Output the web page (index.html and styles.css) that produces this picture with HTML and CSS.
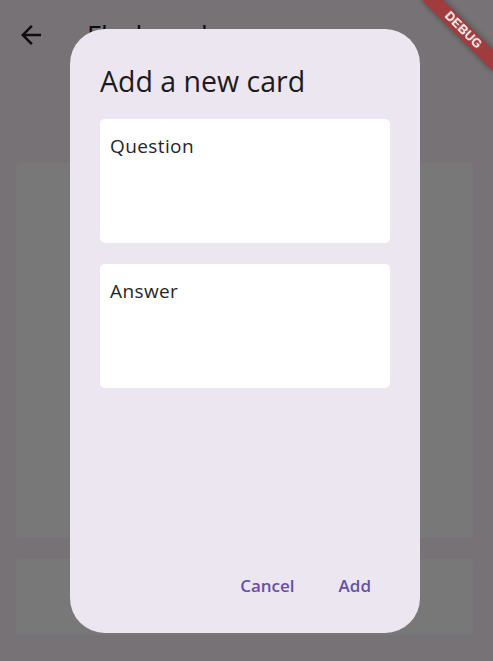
FILE: index.html
```html
<!DOCTYPE html>
<html lang="en">
<head>
<meta charset="utf-8">
<title>Flashcards</title>
<link rel="stylesheet" href="styles.css">
</head>
<body>
<div class="app">
  <header class="appbar">
    <button class="back" aria-label="Back">
      <svg viewBox="0 0 24 24" width="30" height="30"><path d="M20 11H7.83l5.59-5.59L12 4l-8 8 8 8 1.41-1.41L7.83 13H20v-2z" fill="currentColor"/></svg>
    </button>
    <h1 class="title">Flashcards</h1>
  </header>
  <main class="list">
    <div class="card card-main"></div>
    <div class="card card-small"></div>
  </main>
</div>

<div class="overlay">
  <div class="dialog" role="dialog">
    <h2 class="dialog-title">Add a new card</h2>
    <div class="fields">
      <div class="field"><span class="field-label">Question</span></div>
      <div class="field"><span class="field-label">Answer</span></div>
    </div>
    <div class="actions">
      <button class="text-btn">Cancel</button>
      <button class="text-btn">Add</button>
    </div>
  </div>
</div>

<div class="debug-banner">DEBUG</div>
</body>
</html>
```

FILE: styles.css
```css
* { box-sizing: border-box; }

html, body {
  margin: 0;
  height: 100%;
}

body {
  background: #767275;
  font-family: "Open Sans", "Noto Sans", sans-serif;
  overflow: hidden;
}

.app {
  display: flex;
  flex-direction: column;
  height: 100%;
}

.appbar {
  height: 70px;
  display: flex;
  align-items: center;
  padding-left: 16px;
  gap: 41px;
}

.back {
  width: 30px;
  height: 30px;
  padding: 0;
  border: 0;
  background: none;
  color: #0e0d10;
  display: flex;
}

.title {
  margin: 0;
  font-size: 27px;
  font-weight: 400;
  color: #0e0d10;
  line-height: 1;
}

.list {
  display: flex;
  flex-direction: column;
  gap: 21px;
  padding: 93px 0 0 16px;
}

.card {
  width: 457px;
  background: #787878;
  border-radius: 4px;
}

.card-main { height: 375px; }
.card-small { height: 76px; }

.overlay {
  position: fixed;
  inset: 0;
  padding: 29px 0 0 70px;
}

.dialog {
  width: 350px;
  height: 604px;
  background: #ece6f0;
  border-radius: 35px;
  padding: 32px 30px 23px 30px;
  display: flex;
  flex-direction: column;
}

.dialog-title {
  margin: 0;
  font-size: 28.5px;
  font-weight: 400;
  line-height: 40px;
  color: #1d1b20;
}

.fields {
  display: flex;
  flex-direction: column;
  gap: 21px;
  margin-top: 18px;
}

.field {
  height: 124px;
  background: #ffffff;
  border-radius: 5px;
  padding: 13px 10px 0;
}

.field-label {
  font-size: 19px;
  letter-spacing: 0.4px;
  color: #27252a;
  line-height: 28px;
}

.actions {
  margin-top: auto;
  padding-right: 4px;
  display: flex;
  justify-content: flex-end;
  gap: 14px;
}

.text-btn {
  height: 50px;
  padding: 0 15px;
  border: 0;
  background: none;
  font-family: inherit;
  font-size: 17px;
  font-weight: 600;
  color: #6750a4;
  border-radius: 25px;
}

.debug-banner {
  position: fixed;
  left: 413px;
  top: 22.5px;
  width: 100px;
  height: 15px;
  transform: rotate(45deg);
  background: rgba(183, 28, 28, 0.63);
  box-shadow: 0 0 6px rgba(0, 0, 0, 0.4);
  color: #ffffff;
  font-family: "Liberation Sans", sans-serif;
  font-weight: 900;
  font-size: 12.5px;
  line-height: 15px;
  text-align: center;
  letter-spacing: 0.3px;
}
```
